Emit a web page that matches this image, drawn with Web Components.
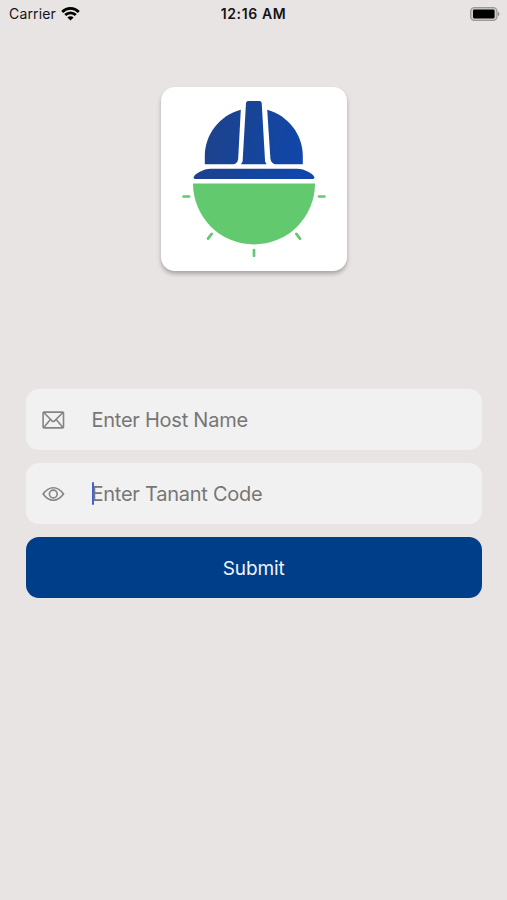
<!DOCTYPE html>
<html lang="en">
<head>
<meta charset="UTF-8">
<meta name="viewport" content="width=device-width, initial-scale=1">
<title>Host Setup</title>
<style>
    body {
        margin: 0;
        background-color: #e8e4e3;
        font-family: Inter, "Liberation Sans", sans-serif;
    }
</style>
</head>
<body>
<host-screen>
    <status-bar slot="status" carrier="Carrier">12:16 AM</status-bar>
    <app-logo slot="logo"></app-logo>
    <icon-field icon="mail">Enter Host Name</icon-field>
    <icon-field icon="eye" focused>Enter Tanant Code</icon-field>
    <submit-button>Submit</submit-button>
</host-screen>

<script>
    class HostScreen extends HTMLElement {
        constructor() {
            super();
            this.attachShadow({ mode: 'open' });
        }

        connectedCallback() {
            this.shadowRoot.innerHTML = `
                <style>
                    :host {
                        display: flex;
                        flex-direction: column;
                        height: 900px;
                        overflow: hidden;
                    }
                    .logo {
                        display: flex;
                        justify-content: center;
                        padding: 58.5px 0 118.4px;
                    }
                    .form {
                        display: flex;
                        flex-direction: column;
                        gap: 13.5px;
                        padding: 0 25.5px 0 26px;
                    }
                </style>
                <slot name="status"></slot>
                <div class="logo"><slot name="logo"></slot></div>
                <div class="form"><slot></slot></div>
            `;
        }
    }

    class StatusBar extends HTMLElement {
        constructor() {
            super();
            this.attachShadow({ mode: 'open' });
        }

        connectedCallback() {
            this.shadowRoot.innerHTML = `
                <style>
                    :host {
                        display: grid;
                        grid-template-columns: 1fr auto 1fr;
                        align-items: center;
                        height: 28px;
                        flex-shrink: 0;
                        box-sizing: border-box;
                        padding: 0 7px 0 9px;
                        color: #141313;
                        font-size: 14px;
                    }
                    .carrier {
                        display: flex;
                        align-items: center;
                        gap: 5px;
                        letter-spacing: 0.15px;
                    }
                    .carrier span, .time { padding-bottom: 2px; }
                    .time {
                        margin-left: -2px;
                        font-weight: 600;
                        letter-spacing: 0.6px;
                    }
                    svg { display: block; }
                    .battery {
                        justify-self: end;
                        margin-bottom: 1px;
                    }
                    .wifi { margin-bottom: 1px; }
                </style>
                <div class="carrier">
                    <span>${this.getAttribute('carrier')}</span>
                    <svg class="wifi" width="19" height="14" viewBox="0 0 19 14">
                        <g fill="none" stroke="#000" stroke-width="2.8">
                            <path d="M1.2 4.9C5.9 .3 13.1 .3 17.8 4.9"/>
                            <path d="M4.2 8.1C7.2 5.2 11.8 5.2 14.8 8.1"/>
                        </g>
                        <path d="M6.4 10.5C8.2 8.9 10.8 8.9 12.6 10.5L9.5 13.6Z"/>
                    </svg>
                </div>
                <span class="time"><slot></slot></span>
                <svg class="battery" width="30" height="14" viewBox="0 0 30 14">
                    <rect x=".7" y=".7" width="26.3" height="12.6" rx="3.8" fill="#d0cdcc" stroke="#9b9897" stroke-width="1.3"/>
                    <rect x="3" y="2.6" width="21.6" height="8.8" rx="1.3"/>
                    <path d="M28 4.8Q31 7 28 9.2Z" fill="#8f8c8b"/>
                </svg>
            `;
        }
    }

    class AppLogo extends HTMLElement {
        constructor() {
            super();
            this.attachShadow({ mode: 'open' });
        }

        connectedCallback() {
            this.shadowRoot.innerHTML = `
                <style>
                    :host {
                        display: block;
                        width: 186px;
                        height: 184.5px;
                        border-radius: 14px;
                        background-color: #fff;
                        box-shadow: 0 3px 4px rgba(0, 0, 0, 0.27);
                    }
                    svg { display: block; }
                </style>
                <svg width="186" height="184.5" viewBox="161 87 186 184.5">
                    <defs>
                        <linearGradient id="helmet" gradientUnits="userSpaceOnUse" x1="204" y1="130" x2="304" y2="160">
                            <stop offset="0" stop-color="#1d428b"/>
                            <stop offset="1" stop-color="#1047ab"/>
                        </linearGradient>
                    </defs>
                    <g fill="url(#helmet)">
                        <path d="M240.8 109.8C219.5 115.5 204.8 134.5 204.8 156V164.2H234Q237.8 163 238.2 158.5Z"/>
                        <path d="M267.2 109.8C288 115.5 302.8 134.5 302.8 156V164.2H275Q271 163 270.4 158.5Z"/>
                        <path d="M246 103Q246.3 101 248.3 101H259.4Q261.4 101 261.7 103L265.1 161.5L266.6 164.2H241L242.6 161.5Z"/>
                        <path d="M193.6 177.5Q194.2 173.8 205 169.5Q207.5 168.8 211 168.8H297Q300.5 168.8 303 169.5Q313.8 173.8 314.4 177.5Q314.3 178.9 313 178.9H195Q193.7 178.9 193.6 177.5Z"/>
                    </g>
                    <path d="M193 183.5H315A61 61 0 0 1 193 183.5Z" fill="#62c96e"/>
                    <g stroke="#62c96e" stroke-width="2.7" stroke-linecap="round">
                        <path d="M183.6 196.5H189"/>
                        <path d="M319 196.5H324.4"/>
                        <path d="M254 250.1V255.8"/>
                        <path d="M211.7 233.9L208 238.6"/>
                        <path d="M296.3 233.9L300 238.6"/>
                    </g>
                </svg>
            `;
        }
    }

    const icons = {
        mail: `
            <rect x="1.1" y="2.1" width="20.4" height="15.8" rx="1"/>
            <path d="M2 2.8L10 10.8Q11.3 12 12.6 10.8L20.7 2.8"/>
            <path d="M2 17.2L8.2 9.8M20.7 17.2L14.4 9.8"/>`,
        eye: `
            <path d="M1.1 10C4.2 5.7 7.6 3.7 11.3 3.7S18.4 5.7 21.5 10C18.4 14.3 15 16.3 11.3 16.3S4.2 14.3 1.1 10Z"/>
            <circle cx="11.3" cy="10" r="3.9"/>`
    };

    class IconField extends HTMLElement {
        constructor() {
            super();
            this.attachShadow({ mode: 'open' });
        }

        connectedCallback() {
            this.shadowRoot.innerHTML = `
                <style>
                    :host {
                        display: flex;
                        align-items: center;
                        height: 60.5px;
                        border-radius: 13px;
                        background-color: #f1f1f1;
                        color: #777676;
                        font-size: 20px;
                    }
                    svg {
                        margin-left: 16px;
                        flex-shrink: 0;
                    }
                    .caret {
                        width: 2.5px;
                        height: 23px;
                        margin-left: 26.5px;
                        margin-right: -2.5px;
                        border-radius: 1px;
                    }
                    :host([focused]) .caret { background-color: #3f63dc; }
                    .placeholder {
                        padding-top: 1.5px;
                        letter-spacing: -0.25px;
                        white-space: nowrap;
                    }
                </style>
                <svg width="23" height="20" viewBox="0 0 23 20" fill="none" stroke="#858484" stroke-width="1.6">
                    ${icons[this.getAttribute('icon')]}
                </svg>
                <span class="caret"></span>
                <span class="placeholder"><slot></slot></span>
            `;
        }
    }

    class SubmitButton extends HTMLElement {
        constructor() {
            super();
            this.attachShadow({ mode: 'open' });
        }

        connectedCallback() {
            this.shadowRoot.innerHTML = `
                <style>
                    :host { display: block; }
                    button {
                        display: block;
                        width: 100%;
                        height: 60.5px;
                        border: 0;
                        border-radius: 13px;
                        padding: 1.5px 0 0;
                        background-color: #003e89;
                        color: #eef4fb;
                        font: inherit;
                        font-size: 19px;
                        letter-spacing: -0.1px;
                    }
                </style>
                <button type="button"><slot></slot></button>
            `;
        }
    }

    customElements.define('host-screen', HostScreen);
    customElements.define('status-bar', StatusBar);
    customElements.define('app-logo', AppLogo);
    customElements.define('icon-field', IconField);
    customElements.define('submit-button', SubmitButton);
</script>
</body>
</html>
